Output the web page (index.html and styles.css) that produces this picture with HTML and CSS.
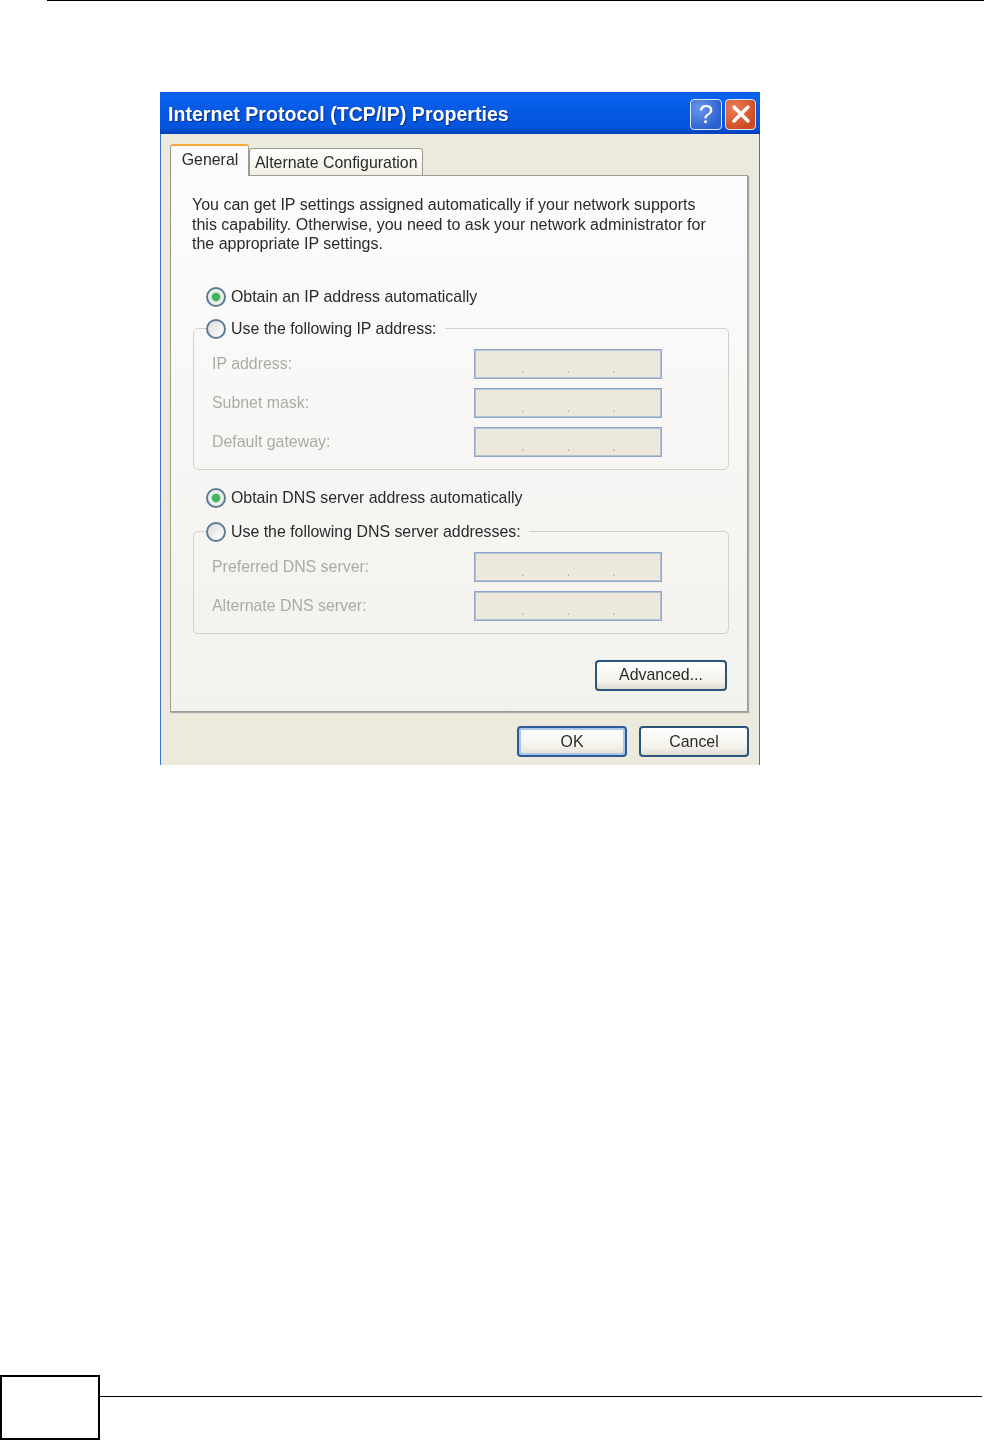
FILE: index.html
```html
<!DOCTYPE html>
<html lang="en">
<head>
    <meta charset="UTF-8">
    <title>Internet Protocol (TCP/IP) Properties</title>
    <link rel="stylesheet" href="styles.css">
</head>
<body>
    <div class="page">
        <div class="page-head"></div>

        <div class="dialog">
            <div class="titlebar">
                <span class="title">Internet Protocol (TCP/IP) Properties</span>
                <div class="title-buttons">
                    <span class="title-btn help">?</span>
                    <span class="title-btn close">
                        <svg width="20" height="20" viewBox="0 0 20 20"><path d="M3 3 L17 17 M17 3 L3 17" stroke="#fff" stroke-width="3.4" stroke-linecap="round"/></svg>
                    </span>
                </div>
            </div>

            <div class="tabs">
                <span class="tab active">General</span>
                <span class="tab">Alternate Configuration</span>
            </div>

            <div class="panel">
                <p class="intro">You can get IP settings assigned automatically if your network supports<br>this capability. Otherwise, you need to ask your network administrator for<br>the appropriate IP settings.</p>

                <label class="radio-row first"><input type="radio" name="ip" class="radio" checked> Obtain an IP address automatically</label>
                <fieldset class="group">
                    <legend><label class="radio-row"><input type="radio" name="ip" class="radio"> Use the following IP address:</label></legend>
                    <div class="fields">
                        <div class="field-row"><span class="field-label">IP address:</span><div class="ip-field"><span>.</span><span>.</span><span>.</span></div></div>
                        <div class="field-row"><span class="field-label">Subnet mask:</span><div class="ip-field"><span>.</span><span>.</span><span>.</span></div></div>
                        <div class="field-row"><span class="field-label">Default gateway:</span><div class="ip-field"><span>.</span><span>.</span><span>.</span></div></div>
                    </div>
                </fieldset>

                <label class="radio-row second"><input type="radio" name="dns" class="radio" checked> Obtain DNS server address automatically</label>
                <fieldset class="group dns">
                    <legend><label class="radio-row"><input type="radio" name="dns" class="radio"> Use the following DNS server addresses:</label></legend>
                    <div class="fields">
                        <div class="field-row"><span class="field-label">Preferred DNS server:</span><div class="ip-field"><span>.</span><span>.</span><span>.</span></div></div>
                        <div class="field-row"><span class="field-label">Alternate DNS server:</span><div class="ip-field"><span>.</span><span>.</span><span>.</span></div></div>
                    </div>
                </fieldset>

                <div class="advanced-row">
                    <button class="btn advanced">Advanced...</button>
                </div>
            </div>

            <div class="dialog-buttons">
                <button class="btn ok">OK</button>
                <button class="btn">Cancel</button>
            </div>
        </div>

        <div class="page-foot">
            <div class="page-number"></div>
            <div class="foot-line"></div>
        </div>
    </div>
</body>
</html>
```

FILE: styles.css
```css
body {
    margin: 0;
    padding: 0;
    background: #fff;
    font-family: 'Liberation Sans', Arial, sans-serif;
    font-size: 15.9px;
    color: #2a2a2a;
}
.page {
    height: 1440px;
    display: flex;
    flex-direction: column;
    overflow: hidden;
}
.page-head {
    height: 1px;
    margin-left: 47px;
    background: #000;
}

/* dialog, the source picture is a soft screenshot */
.dialog {
    width: 600px;
    height: 673px;
    box-sizing: border-box;
    margin: 91px 0 0 160px;
    border-left: 1px solid #3a72d6;
    border-right: 1px solid #3a72d6;
    background: #ece9dd;
    display: flex;
    flex-direction: column;
    filter: blur(0.35px);
}
.titlebar {
    height: 42px;
    box-sizing: border-box;
    margin: 0 -1px;
    padding: 2px 4px 0 8px;
    display: flex;
    align-items: center;
    justify-content: space-between;
    background: linear-gradient(#0a5be0 0%, #0a62ef 12%, #0558e2 50%, #0454de 85%, #0340b8 100%);
}
.title {
    margin-top: 1px;
    color: #fff;
    font-size: 19.6px;
    font-weight: bold;
    text-shadow: 1px 1px 1px #0a2f8a;
}
.title-buttons {
    display: flex;
    gap: 3px;
}
.title-btn {
    width: 32px;
    height: 31px;
    box-sizing: border-box;
    border: 1px solid #dfe8f8;
    border-radius: 4px;
    display: flex;
    align-items: center;
    justify-content: center;
}
.help {
    background: radial-gradient(circle at 30% 30%, #6b97ea, #2a5fd0 75%);
    color: #fff;
    font-size: 26px;
}
.close {
    width: 31px;
    background: radial-gradient(circle at 30% 30%, #e8805a, #cf4a22 75%);
}

/* tabs */
.tabs {
    display: flex;
    align-items: flex-end;
    height: 41px;
    margin-left: 9px;
}
.tab {
    height: 27px;
    padding: 1px 4px 0 5px;
    display: flex;
    align-items: center;
    box-sizing: border-box;
    border: 1px solid #9c9b91;
    border-bottom: none;
    border-radius: 3px 3px 0 0;
    background: linear-gradient(#fff, #f1efe6);
}
.tab.active {
    height: 32px;
    width: 79px;
    justify-content: center;
    padding: 0 0 2px 1px;
    border-top: 2px solid #f2a93b;
    background: #fbfbfb;
    margin-bottom: -1px;
    position: relative;
    z-index: 1;
}

/* panel */
.panel {
    width: 578px;
    height: 537px;
    box-sizing: border-box;
    margin-left: 9px;
    padding: 19px 18px 0 21px;
    border: 1px solid #9c9b91;
    box-shadow: 1px 1px 1px #aaa;
    background: linear-gradient(#fcfcfe, #f3f1ec);
}
.intro {
    margin: 0;
    font-size: 16px;
    line-height: 19.5px;
}
.radio-row {
    display: flex;
    align-items: center;
    gap: 5px;
    height: 20px;
}
.radio-row.first {
    margin: 33px 0 0 14px;
}
.radio-row.second {
    margin: 18px 0 0 14px;
}
.radio {
    appearance: none;
    width: 20px;
    height: 20px;
    margin: 0;
    box-sizing: border-box;
    border: 2px solid #5b7a96;
    border-radius: 50%;
    background: linear-gradient(135deg, #dcdcd6, #fff);
}
.radio:checked {
    background: radial-gradient(circle, #3fb45a 0, #3fb45a 3.5px, #e9eee9 5px, #f4f4f0 100%);
}

/* group boxes */
.group {
    width: 536px;
    box-sizing: border-box;
    margin: 12px 0 0 1px;
    padding: 0 0 12px;
    border: 1px solid #d3d1c8;
    border-radius: 5px;
    min-inline-size: 0;
}
.group.dns {
    margin-top: 14px;
}
.group legend {
    margin-left: 12px;
    padding: 0 8px 0 0;
}
.fields {
    display: flex;
    flex-direction: column;
    gap: 9px;
    padding: 10px 0 0 18px;
}
.field-row {
    display: flex;
    align-items: center;
    justify-content: space-between;
    width: 450px;
}
.field-label {
    color: #acaba3;
}
.ip-field {
    width: 188px;
    height: 30px;
    box-sizing: border-box;
    border: 1px solid #8fa6c9;
    outline: 1px solid #b4c2da;
    outline-offset: -2px;
    background: #ece9dc;
    display: flex;
    align-items: flex-end;
    color: #aaa;
    font-size: 12px;
    line-height: 14px;
    padding: 0 0 2px 4px;
}
.ip-field span {
    width: 45.5px;
    text-align: right;
}

/* buttons */
.btn {
    width: 110px;
    height: 31px;
    padding: 0;
    border: 2px solid #2a5478;
    border-radius: 4px;
    background: linear-gradient(#fff, #f3f2ec 70%, #dedbd0);
    font-family: 'Liberation Sans', Arial, sans-serif;
    font-size: 15.9px;
    color: #2a2a2a;
}
.btn.ok {
    box-shadow: inset 0 0 0 2px #a9c6ee;
    border-color: #2b5a94;
}
.advanced-row {
    display: flex;
    justify-content: flex-end;
    margin: 26px 2px 0 0;
}
.btn.advanced {
    width: 132px;
}
.dialog-buttons {
    display: flex;
    justify-content: flex-end;
    gap: 12px;
    margin: 14px 10px 0 0;
}

/* page footer */
.page-foot {
    margin-top: auto;
    height: 65px;
    display: flex;
    align-items: flex-start;
}
.page-number {
    width: 100px;
    height: 65px;
    box-sizing: border-box;
    border: 2px solid #000;
}
.foot-line {
    flex: 1;
    height: 1px;
    margin: 21px 2px 0 0;
    background: #000;
}
```
